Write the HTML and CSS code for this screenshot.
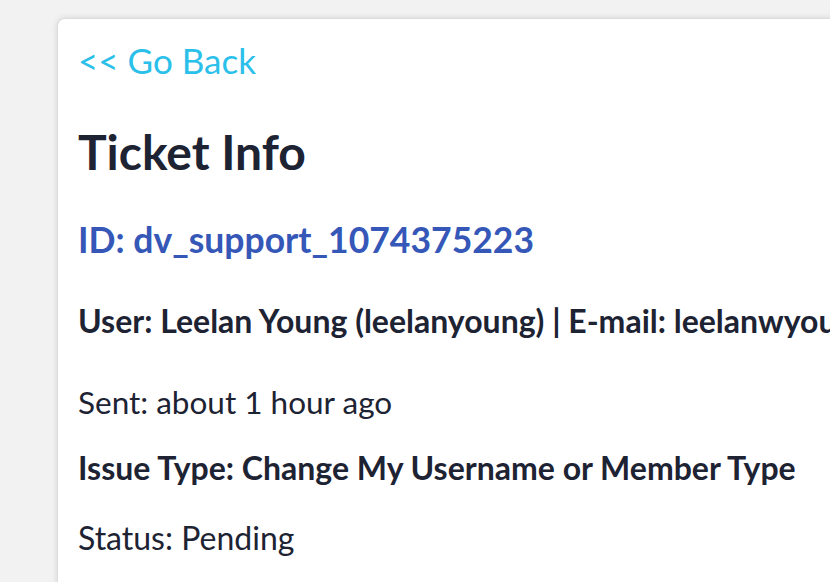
FILE: index.html
```html
<!DOCTYPE html>
<html>
<head>
<meta charset="utf-8">
<link rel="stylesheet" href="styles.css">
</head>
<body>
<div class="page">
  <div class="card">
    <a class="back" href="#">&lt;&lt; Go Back</a>
    <h1 class="title">Ticket Info</h1>
    <h2 class="ticket-id">ID: dv_support_1074375223</h2>
    <p class="row bold user">User: Leelan Young (leelanyoung) | E-mail: leelanwyoung@gmail.com</p>
    <p class="row sent">Sent: about 1 hour ago</p>
    <p class="row bold issue">Issue Type: Change My Username or Member Type</p>
    <p class="row status">Status: Pending</p>
  </div>
</div>
</body>
</html>
```

FILE: styles.css
```css
html, body {
  margin: 0;
  padding: 0;
  background: #f2f2f2;
  overflow: hidden;
  height: 100%;
}
body {
  font-family: Lato, "Open Sans", sans-serif;
  color: #1d2333;
}
.page {
  padding: 18px 0 0 57px;
}
.card {
  width: 900px;
  min-height: 700px;
  background: #ffffff;
  border: 1px solid #dcdcdc;
  border-radius: 8px;
  box-shadow: 0 0 6px rgba(0,0,0,0.12);
  padding: 20px 0 0 20px;
  box-sizing: border-box;
  white-space: nowrap;
}
.back {
  display: block;
  font-size: 35px;
  line-height: 1.2;
  color: #2bc0ea;
  text-decoration: none;
}
.title {
  margin: 42px 0 0;
  font-size: 48px;
  line-height: 1.2;
  font-weight: 700;
}
.ticket-id {
  margin: 38px 0 0;
  font-size: 35.5px;
  line-height: 1.2;
  font-weight: 700;
  color: #3557b7;
}
.row {
  margin: 0;
  font-size: 32px;
  line-height: 1.2;
}
.bold { font-weight: 700; }
.user { margin-top: 41px; }
.sent { margin-top: 43px; font-size: 31.5px; }
.issue { margin-top: 28px; }
.status { margin-top: 31px; }
```
